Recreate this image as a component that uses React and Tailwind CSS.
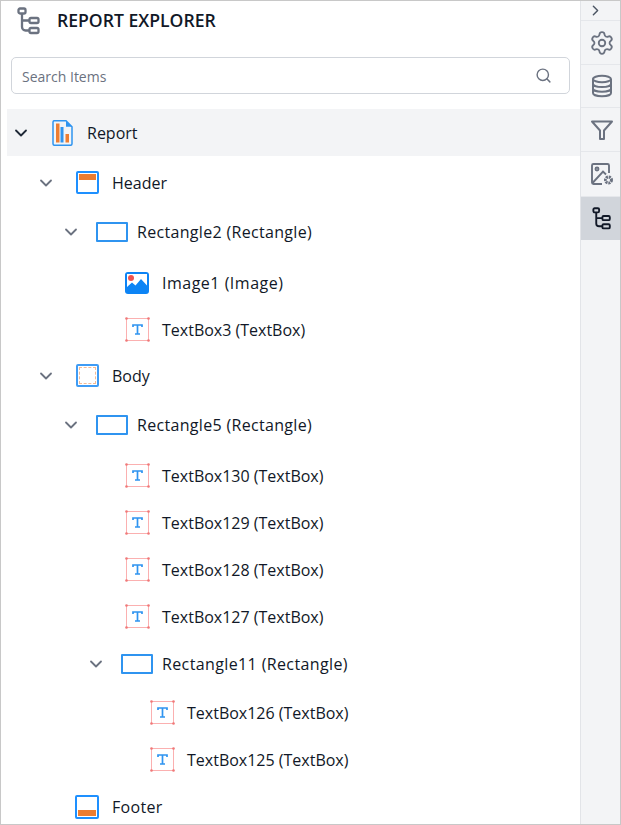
import { Search, ChevronDown, ChevronRight, Settings } from "lucide-react";

const Chev = () => <ChevronDown size={20} strokeWidth={2.2} />;

const TreeIcon = ({ className }) => (
  <svg viewBox="0 0 24 28" fill="none" stroke="currentColor" strokeWidth="2.3" className={className}>
    <rect x="1.500" y="1.500" width="7" height="5" rx="1.500" />
    <rect x="12.500" y="11" width="9" height="5" rx="1.500" />
    <rect x="12.500" y="21" width="9" height="5" rx="1.500" />
    <path d="M5 6.500V20a3.500 3.500 0 0 0 3.500 3.500h4M5 13.500h7.500" />
  </svg>
);

const DbIcon = () => (
  <svg viewBox="0 0 24 24" width="24" height="24" fill="none" stroke="#6b7280" strokeWidth="2">
    <ellipse cx="12" cy="5" rx="9" ry="3.200" />
    <path d="M3 5v14c0 1.800 4 3.200 9 3.200s9-1.400 9-3.200V5M3 9.800c0 1.800 4 3.200 9 3.200s9-1.400 9-3.200M3 14.500c0 1.800 4 3.200 9 3.200s9-1.400 9-3.200" />
  </svg>
);

const FilterIcon = () => (
  <svg viewBox="0 0 24 24" width="24" height="24" fill="none" stroke="#6b7280" strokeWidth="2" strokeLinejoin="round">
    <path d="M2 3.500h20l-8 9V21h-4v-8.500z" />
  </svg>
);

const ImageSettingIcon = () => (
  <svg viewBox="0 0 24 24" width="24" height="24" fill="none" stroke="#6b7280" strokeWidth="1.900">
    <path d="M12 22H3.500A1.500 1.500 0 0 1 2 20.500v-17A1.500 1.500 0 0 1 3.500 2h14A1.500 1.500 0 0 1 19 3.500V11" />
    <circle cx="7" cy="7" r="1.500" />
    <path d="M2.500 21 13 9.500l3 3" />
    <circle cx="18.500" cy="18" r="3" strokeWidth="3" strokeDasharray="2 .8" />
  </svg>
);

const ReportIcon = () => (
  <svg viewBox="0 0 22 26" width="22" height="26" fill="none">
    <path d="M3 .8h12l6 6v17a1.500 1.500 0 0 1-1.500 1.500h-16A1.500 1.500 0 0 1 2 23.800V2.300A1.500 1.500 0 0 1 3 .8z" stroke="#2f94f0" strokeWidth="1.500" />
    <path d="M15 .8v6h6z" fill="#2f94f0" />
    <rect x="5" y="3.500" width="3.500" height="19" fill="#ed7d31" />
    <rect x="9.500" y="7" width="3" height="15.500" fill="#2f94f0" />
    <rect x="14.500" y="14" width="3.500" height="8.500" fill="#ed7d31" />
  </svg>
);

const HeaderIcon = () => (
  <div className="w-[23px] h-[23px] border-2 border-[#1e90ff] rounded-[2px] bg-white p-[1px]">
    <div className="h-[6px] bg-[#ed7d31]" />
  </div>
);

const FooterIcon = () => (
  <div className="w-[24px] h-[24px] border-2 border-[#1e90ff] rounded-[2px] bg-white p-[1px] flex items-end">
    <div className="h-[6px] w-full bg-[#ed7d31]" />
  </div>
);

const BodyIcon = () => (
  <div className="w-[23px] h-[23px] border-2 border-[#3f9cf5] rounded-[2px] bg-white p-[1px]">
    <div className="w-full h-full border border-dashed border-[#f5bb95]" />
  </div>
);

const RectIcon = () => <div className="w-[32px] h-[20px] border-2 border-[#2f94f0] rounded-[1px] bg-white" />;

const ImageIcon = () => (
  <svg viewBox="0 0 24 22" width="24" height="22">
    <rect width="24" height="22" rx="3" fill="#0d84f5" />
    <rect x="2" y="2" width="20" height="14" fill="#fff" />
    <path d="M2 15l5-4.500 3.500 3L16 7l6 6.500V17H2z" fill="#0d84f5" />
    <circle cx="6" cy="6" r="3" fill="#ef5350" />
  </svg>
);

const TextBoxIcon = () => (
  <svg viewBox="0 0 25 25" width="25" height="25" fill="none">
    <rect x="1.500" y="1.500" width="22" height="22" stroke="#fbb0b0" strokeWidth="1" />
    <g fill="#f07878">
      <circle cx="1.500" cy="1.500" r="1.300" />
      <circle cx="23.500" cy="1.500" r="1.300" />
      <circle cx="1.500" cy="23.500" r="1.300" />
      <circle cx="23.500" cy="23.500" r="1.300" />
    </g>
    <path d="M8 10V8h9v2M12.500 8v9M10 17h5" stroke="#2f94f0" strokeWidth="1.700" />
  </svg>
);

const tree = [
  {
    label: "Report", icon: <ReportIcon />, children: [
      {
        label: "Header", icon: <HeaderIcon />, gap: "mt-[3px]", children: [
          {
            label: "Rectangle2 (Rectangle)", icon: <RectIcon />, gap: "mt-[2px]", wide: "tracking-[0.32px]", children: [
              { label: "Image1 (Image)", icon: <ImageIcon />, gap: "mt-[4px]", wide: "tracking-[0.5px]" },
              { label: "TextBox3 (TextBox)", icon: <TextBoxIcon /> },
            ],
          },
        ],
      },
      {
        label: "Body", icon: <BodyIcon />, gap: "-mt-[1px]", children: [
          {
            label: "Rectangle5 (Rectangle)", icon: <RectIcon />, gap: "mt-[2px]", wide: "tracking-[0.32px]", children: [
              { label: "TextBox130 (TextBox)", icon: <TextBoxIcon />, gap: "mt-[4px]" },
              { label: "TextBox129 (TextBox)", icon: <TextBoxIcon /> },
              { label: "TextBox128 (TextBox)", icon: <TextBoxIcon /> },
              { label: "TextBox127 (TextBox)", icon: <TextBoxIcon /> },
              {
                label: "Rectangle11 (Rectangle)", icon: <RectIcon />, wide: "tracking-[0.38px]", children: [
                  { label: "TextBox126 (TextBox)", icon: <TextBoxIcon />, gap: "mt-[2px]" },
                  { label: "TextBox125 (TextBox)", icon: <TextBoxIcon /> },
                ],
              },
            ],
          },
        ],
      },
      { label: "Footer", icon: <FooterIcon />, wide: "tracking-[0.3px]" },
    ],
  },
];

const TreeNode = ({ node, root }) => (
  <div className={node.gap}>
    <div className={`flex items-center h-[47px] ${root ? "bg-[#f3f4f6]" : ""}`}>
      <div className={`w-[27px] flex justify-center ${root ? "text-[#1f2937]" : "text-[#6b7280]"}`}>
        {node.children && <Chev />}
      </div>
      <div className="w-[38px] ml-[9px] flex justify-center">{node.icon}</div>
      <span className={`ml-[6px] text-[16px] text-[#111827] whitespace-nowrap ${node.wide || ""}`}>{node.label}</span>
    </div>
    {node.children && (
      <div className={root ? "ml-0" : "ml-[25px]"}>
        {node.children.map((c) => (
          <div key={c.label} className={root ? "ml-[25px]" : ""}>
            <TreeNode node={c} />
          </div>
        ))}
      </div>
    )}
  </div>
);

const railItems = [
  { key: "gear", icon: <Settings size={26} strokeWidth={1.7} className="text-[#6b7280]" />, h: "h-[44px]" },
  { key: "db", icon: <DbIcon />, h: "h-[43px]" },
  { key: "filter", icon: <FilterIcon />, h: "h-[44px]" },
  { key: "image", icon: <ImageSettingIcon />, h: "h-[45px]" },
];

export default function App() {
  return (
    <div className="w-[621px] h-[825px] flex bg-white border border-[#c8c8c8] overflow-hidden font-['Open_Sans','Noto_Sans',sans-serif]">
      <div className="w-[579px] shrink-0 overflow-hidden">
        <div className="flex items-center h-[40px] pl-[16px]">
          <TreeIcon className="w-[24px] h-[28px] text-[#6b7280]" />
          <span className="ml-[16px] mb-[2px] text-[17.6px] font-semibold text-[#111827] whitespace-nowrap">REPORT EXPLORER</span>
        </div>
        <div className="mt-[16px] ml-[10px] w-[559px] h-[37px] border border-[#d1d5db] rounded-[5px] flex items-center pl-[10px] pr-[17px]">
          <span className="flex-1 text-[14px] text-[#6b7280] pt-[1px]">Search Items</span>
          <Search size={17} className="text-[#6b7280]" />
        </div>
        <div className="mt-[15px] ml-[6px]">
          <TreeNode node={tree[0]} root />
        </div>
      </div>
      <div className="flex-1 bg-[#f3f4f6] border-l border-[#e2e4e8] flex flex-col">
        <div className="h-[20px] flex items-center pl-[6px] border-b border-[#e5e7eb] text-[#4b5563]">
          <ChevronRight size={17} strokeWidth={2} />
        </div>
        {railItems.map((it) => (
          <div key={it.key} className={`${it.h} flex items-center justify-center pl-[2px] border-b border-[#e5e7eb]`}>
            {it.icon}
          </div>
        ))}
        <div className="h-[43px] bg-[#d1d5db] flex items-center justify-center pl-[2px]">
          <TreeIcon className="w-[20px] h-[23px] text-[#111827]" />
        </div>
      </div>
    </div>
  );
}
